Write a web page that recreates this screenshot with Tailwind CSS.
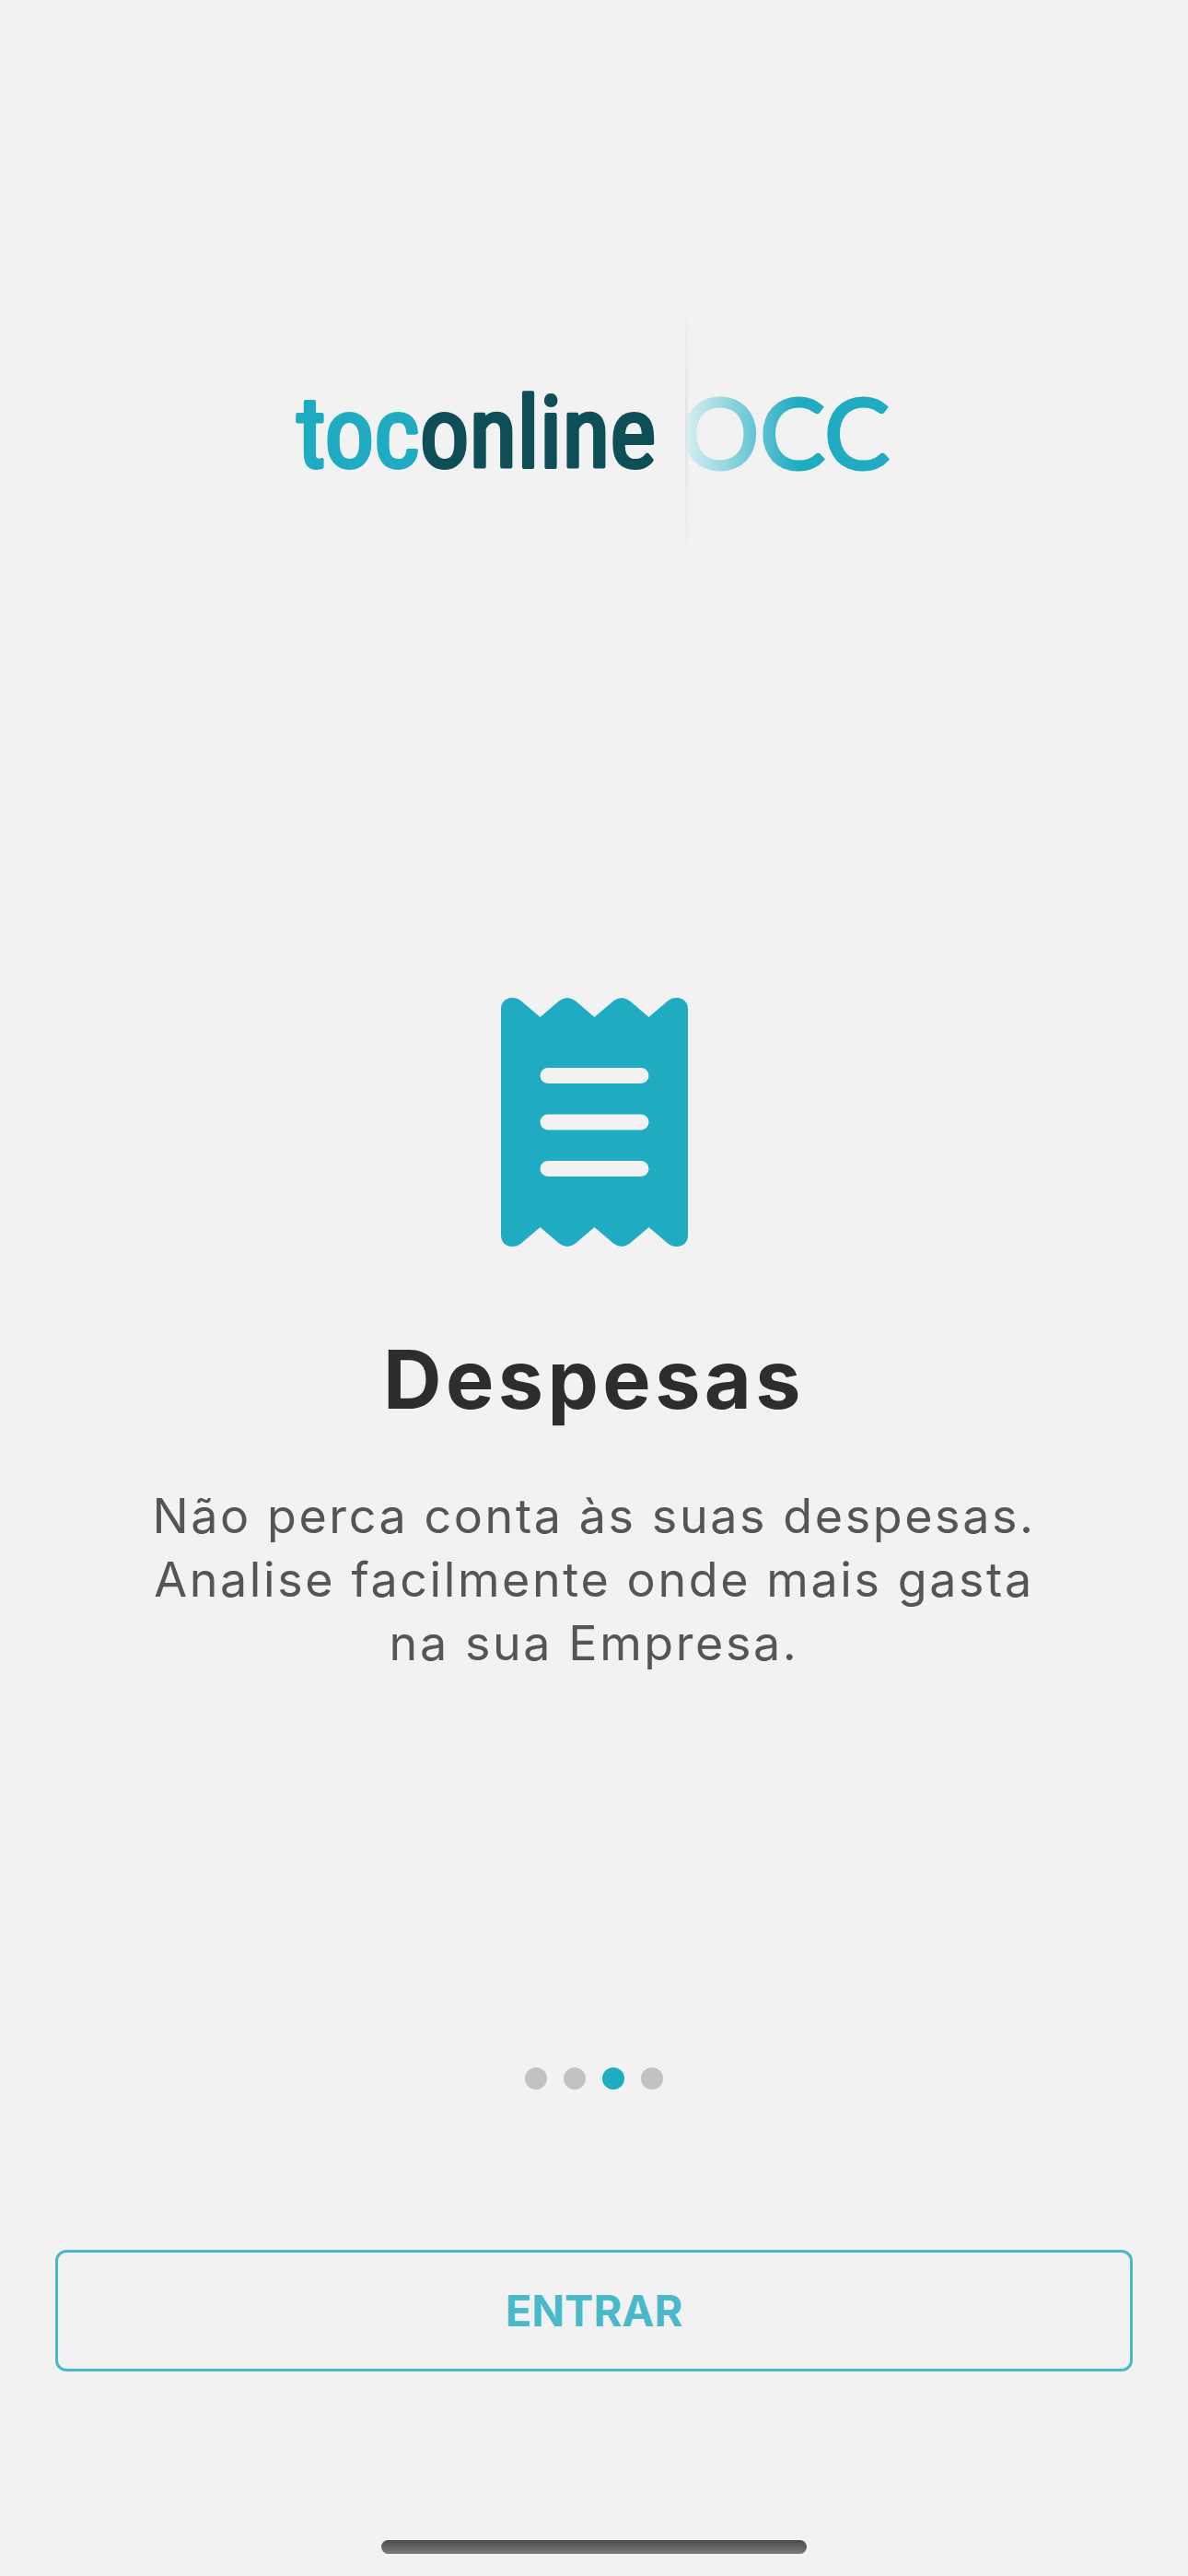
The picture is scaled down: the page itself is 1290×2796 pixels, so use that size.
<!DOCTYPE html>
<html lang="pt">
<head>
  <meta charset="UTF-8">
  <meta name="viewport" content="width=device-width, initial-scale=1">
  <title>TOConline</title>
  <script src="https://cdn.jsdelivr.net/npm/@tailwindcss/browser@4"></script>
</head>
<body class="bg-[#f2f2f2] font-['Inter',sans-serif]">

  <div class="min-h-screen flex flex-col items-center px-15 pt-[326px] pb-6">

    <header>
      <svg class="w-[648px] max-w-full" viewBox="0 0 648 280" role="img" aria-label="toconline OCC">
        <defs>
          <linearGradient id="fade" gradientUnits="userSpaceOnUse" x1="422" y1="0" x2="546" y2="0">
            <stop offset="0" stop-color="#d9f0f3" />
            <stop offset="1" stop-color="#1fabc1" />
          </linearGradient>
          <linearGradient id="line" x1="0" y1="0" x2="0" y2="1">
            <stop offset="0" stop-color="#e3e3e3" stop-opacity="0" />
            <stop offset="0.5" stop-color="#e3e3e3" />
            <stop offset="1" stop-color="#e3e3e3" stop-opacity="0" />
          </linearGradient>
          <clipPath id="cut">
            <rect x="425" y="0" width="223" height="280" />
          </clipPath>
        </defs>
        <text x="1" y="181" font-family="'Roboto Condensed', 'Liberation Sans Narrow', sans-serif" font-size="107" stroke-width="4" stroke-linejoin="round"><tspan fill="#1fabc1" stroke="#1fabc1">toc</tspan><tspan fill="#0e4e57" stroke="#0e4e57">online</tspan></text>
        <rect x="423" y="0" width="3" height="280" fill="url(#line)" />
        <text x="418" y="183" font-family="Lato, sans-serif" font-size="107" fill="url(#fade)" stroke="url(#fade)" stroke-width="3" clip-path="url(#cut)">OCC</text>
      </svg>
    </header>

    <main class="mt-[477px] flex flex-col items-center text-center">
      <svg class="w-[203px] h-[270px]" viewBox="0 0 203 270" fill="none" aria-hidden="true">
        <path fill="#1fabc1" d="M0 12C0 5 5 0 12 0C16 0 19 1 22 3.500L42.500 21L63 3.500Q72 -3.500 81 3.500L101.500 21L122 3.500Q131 -3.500 140 3.500L160.500 21L181 3.500C184 1 187 0 191 0C198 0 203 5 203 12V258C203 265 198 270 191 270C187 270 184 269 181 266.500L160.500 249L140 266.500Q131 273.500 122 266.500L101.500 249L81 266.500Q72 273.500 63 266.500L42.500 249L22 266.500C19 269 16 270 12 270C5 270 0 265 0 258Z" />
        <path stroke="#f2f2f2" stroke-width="17" stroke-linecap="round" d="M51 84.500H152M51 135H152M51 185.500H152" />
      </svg>
      <h1 class="mt-[90px] text-[88px] leading-[108px] font-bold tracking-wider text-[#2d2d2d]">Despesas</h1>
      <p class="mt-[60px] max-w-[1020px] text-[52px] leading-[69px] tracking-wider text-[#555555]">Não perca conta às suas despesas. Analise facilmente onde mais gasta na sua Empresa.</p>
    </main>

    <div class="mt-auto w-full flex flex-col items-center">
      <nav class="flex gap-[18px]" aria-label="Slides">
        <button class="size-6 rounded-full bg-[#c2c2c2]" aria-label="Slide 1"></button>
        <button class="size-6 rounded-full bg-[#c2c2c2]" aria-label="Slide 2"></button>
        <button class="size-6 rounded-full bg-[#1fabc1]" aria-label="Slide 3" aria-current="true"></button>
        <button class="size-6 rounded-full bg-[#c2c2c2]" aria-label="Slide 4"></button>
      </nav>

      <button class="mt-[174px] w-full h-[132px] rounded-xl border-3 border-[#49b8ca] text-[47px] font-bold text-[#49b8ca]">ENTRAR</button>

      <div class="mt-[183px] h-[15px] w-[462px] rounded-full bg-linear-to-b from-[#4b4b4b] to-[#7c7c7c]"></div>
    </div>

  </div>

</body>
</html>
